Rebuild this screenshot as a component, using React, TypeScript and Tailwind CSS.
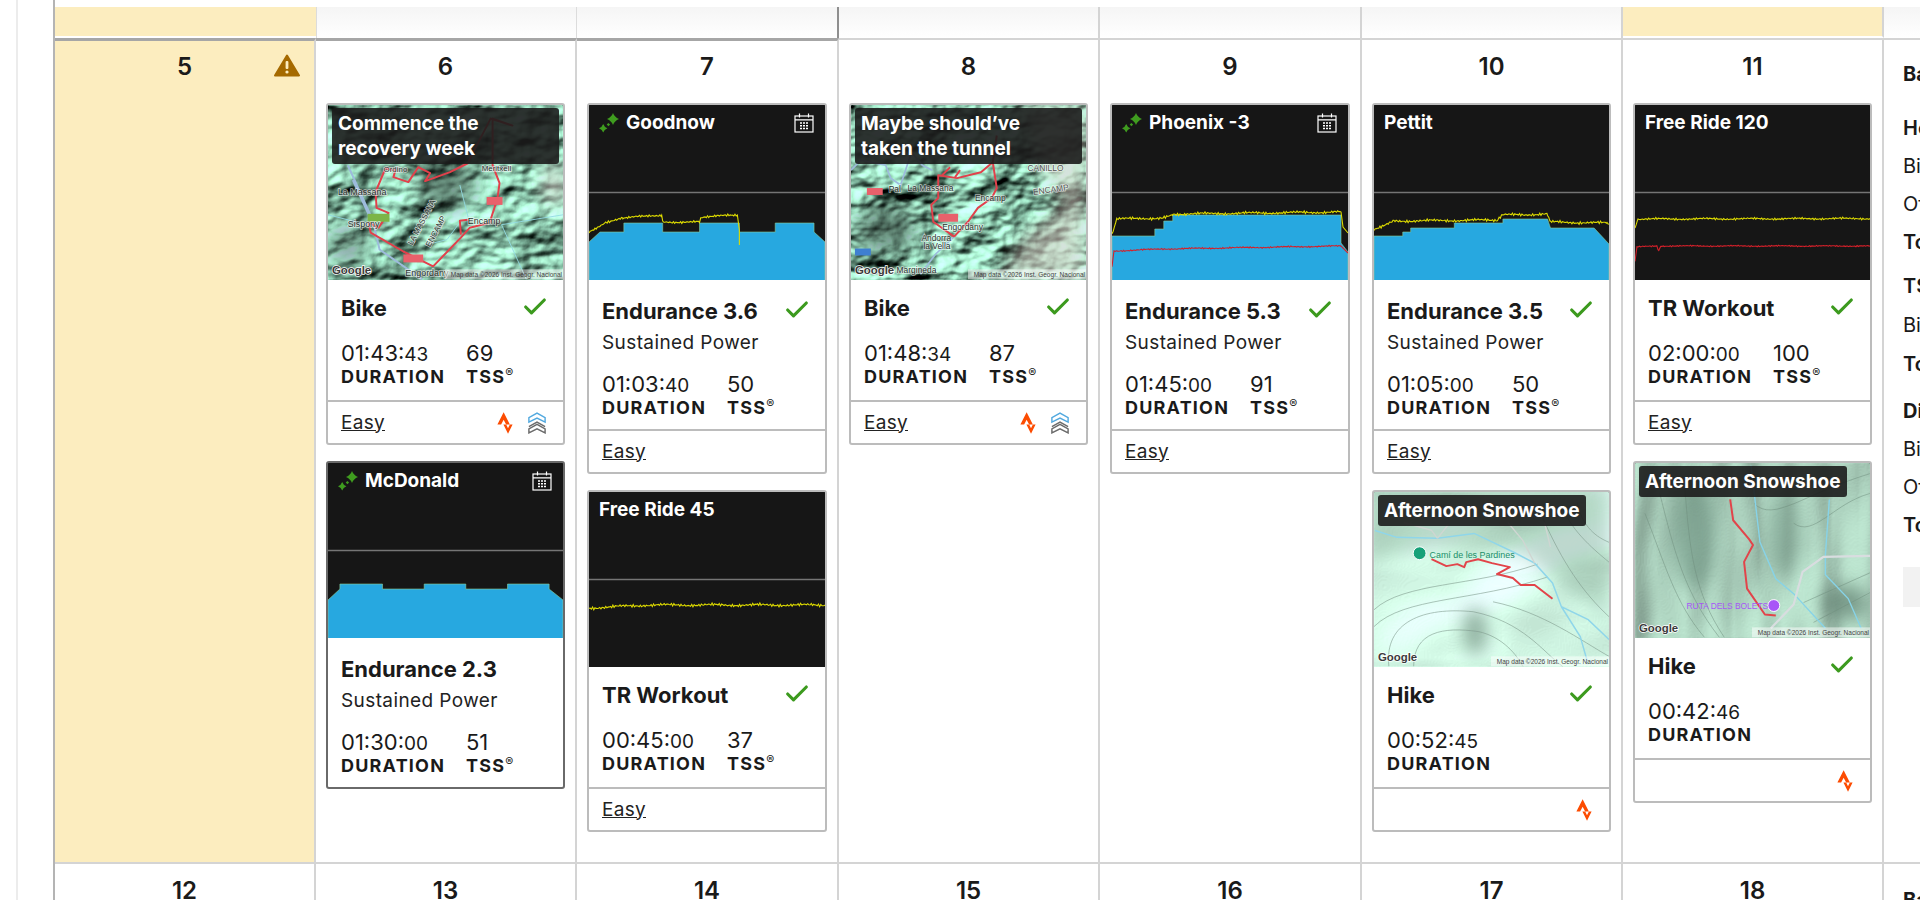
import React from 'react'
import { Check } from 'lucide-react'

type Thumb = 'gorge' | 'valley' | 'pardines' | 'boletes'

interface Activity {
    id: string
    banner: string
    bannerWide?: boolean
    planned?: boolean
    map?: Thumb
    chart?: React.ReactNode
    name: string
    sub?: string
    noCheck?: boolean
    hms: string
    sec: string
    tss?: string
    rating?: string
    strava?: boolean
    chevrons?: boolean
    outline?: boolean
}

// power/hr trace: runs through the key points with a bit of jitter
function noisy(keys: number[][], amp: number, seed: number) {
    const pts: string[] = []
    for (let i = 0; i < keys.length - 1; i++) {
        const [x0, y0] = keys[i]
        const [x1, y1] = keys[i + 1]
        for (let x = x0; x < x1; x += 1.2) {
            const t = (x - x0) / (x1 - x0)
            const n = Math.sin(x * 2.3 + seed) * Math.sin(x * 0.47 + seed * 2) + Math.sin(x * 5.1 + seed * 3) * 0.5
            pts.push(`${x.toFixed(1)},${(y0 + (y1 - y0) * t + n * amp).toFixed(1)}`)
        }
    }
    const last = keys[keys.length - 1]
    pts.push(`${last[0]},${last[1]}`)
    return pts.join(' ')
}

function Chart({ blue, yellow, red }: { blue?: string; yellow?: string; red?: string }) {
    return (
        <svg viewBox="0 0 237 175" className="block w-full h-[175px]" preserveAspectRatio="none">
            <rect width="237" height="175" fill="#161616" />
            <line x1="0" x2="237" y1="87.5" y2="87.5" stroke="#757575" strokeWidth="1.4" />
            {blue && <polygon points={blue} fill="#27a8e0" stroke="#8ccf9a" strokeWidth="0.6" />}
            {yellow && <polyline points={yellow} fill="none" stroke="#dedb00" strokeWidth="1.1" />}
            {red && <polyline points={red} fill="none" stroke="#d4202a" strokeWidth="1.1" />}
        </svg>
    )
}

function Sparkles() {
    return (
        <svg viewBox="0 0 20 20" className="w-[20px] h-[20px] shrink-0">
            <path d="M14 0 Q15.6 4.2 20 6 Q15.6 7.8 14 12 Q12.4 7.8 8 6 Q12.4 4.2 14 0Z" fill="#3f9c1f" />
            <path d="M4.2 11 Q5.2 14 8.4 15.2 Q5.2 16.4 4.2 19.4 Q3.2 16.4 0 15.2 Q3.2 14 4.2 11Z" fill="#3f9c1f" />
            <rect x="8.2" y="10.4" width="2.4" height="2.4" fill="#3f9c1f" transform="rotate(45 9.4 11.6)" />
        </svg>
    )
}

function CalendarIcon() {
    return (
        <svg viewBox="0 0 20 20" className="w-[20px] h-[20px] shrink-0" fill="none" stroke="#fff" strokeWidth="1.2">
            <rect x="1" y="3" width="18" height="16" />
            <path d="M1 6.8H19M5.5 0.5V4.5M14.5 0.5V4.5" />
            <path d="M6 10h2M9 10h2M12 10h2M6 12.7h2M9 12.7h2M12 12.7h2M6 15.4h2M9 15.4h2M12 15.4h2" strokeWidth="1.5" />
        </svg>
    )
}

function StravaIcon() {
    return (
        <svg viewBox="3 0 18 24" className="w-[16px] h-[22px]">
            <path d="M15.387 17.944l-2.089-4.116h-3.065L15.387 24l5.15-10.172h-3.066m-7.008-5.599l2.836 5.598h4.172L10.463 0l-7 13.828h4.169" fill="#fc4c02" />
        </svg>
    )
}

function ChevronsIcon() {
    return (
        <svg viewBox="0 0 20 24" className="w-[18px] h-[22px]" fill="none" strokeWidth="1.6">
            <path d="M1 11 V6 L10 1 L19 6 V11 L10 6.5Z" stroke="#52a9df" />
            <path d="M1 16 L10 11 L19 16" stroke="#6b6b6b" />
            <path d="M1 23 V18.5 L10 13.5 L19 18.5 V23 L10 18.5Z" stroke="#6b6b6b" />
        </svg>
    )
}

function WarningIcon() {
    return (
        <svg viewBox="0 0 26 23" className="w-[26px] h-[23px]">
            <path d="M13 1.5 L25 21.5 H1Z" fill="#a56a00" stroke="#a56a00" strokeWidth="2" strokeLinejoin="round" />
            <rect x="11.6" y="7" width="2.8" height="8" rx="1" fill="#fcedbf" />
            <circle cx="13" cy="18" r="1.6" fill="#fcedbf" />
        </svg>
    )
}

// hillshade made from noise, same idea for every map but different settings
function Terrain({ id, freq, octaves, scale, color, seed, diffuse = 1.1, contrast = 1, azimuth = 235, elevation = 45 }: { id: string; freq: string; octaves: number; scale: number; color: string; seed: number; diffuse?: number; contrast?: number; azimuth?: number; elevation?: number }) {
    const intercept = (1 - contrast) * 0.42
    return (
        <>
            <filter id={id} x="0" y="0" width="100%" height="100%" colorInterpolationFilters="sRGB">
                <feTurbulence type="fractalNoise" baseFrequency={freq} numOctaves={octaves} seed={seed} />
                <feDiffuseLighting surfaceScale={scale} diffuseConstant={diffuse} lightingColor={color}>
                    <feDistantLight azimuth={azimuth} elevation={elevation} />
                </feDiffuseLighting>
                <feComponentTransfer>
                    <feFuncR type="linear" slope={contrast} intercept={intercept} />
                    <feFuncG type="linear" slope={contrast} intercept={intercept} />
                    <feFuncB type="linear" slope={contrast} intercept={intercept} />
                </feComponentTransfer>
                <feGaussianBlur stdDeviation="0.5" />
            </filter>
            <rect width="237" height="175" filter={`url(#${id})`} />
        </>
    )
}

function MapThumb({ kind }: { kind: Thumb }) {
    return (
        <svg viewBox="0 0 237 175" className="block w-full h-[175px] font-['Liberation_Sans',sans-serif]">
            <defs>
                <filter id={`soft-${kind}`} x="-60%" y="-60%" width="220%" height="220%"><feGaussianBlur stdDeviation="9" /></filter>
                <filter id={`route-${kind}`}><feGaussianBlur stdDeviation="0.3" /></filter>
            </defs>
            {kind === 'gorge' && (
                <g>
                    <Terrain id="t-gorge" freq="0.014 0.02" octaves={4} scale={15} color="#aae4ca" seed={7} contrast={1.3} />
                    <ellipse cx="120" cy="80" rx="30" ry="26" fill="#2f3a35" opacity="0.5" filter="url(#soft-gorge)" />
                    <ellipse cx="20" cy="140" rx="22" ry="22" fill="#2f3a35" opacity="0.4" filter="url(#soft-gorge)" />
                    <ellipse cx="228" cy="80" rx="12" ry="22" fill="#d8d4cc" opacity="0.7" filter="url(#soft-gorge)" />
                    <g filter="url(#route-gorge)" fill="none">
                        <path d="M20 60 L45 115 L52 145 L95 175 M25 75 L48 125" stroke="#9dbbdc" strokeWidth="2" />
                        <path d="M0 110 L40 120 M135 115 L120 135 L100 140 M175 120 L200 175 M175 120 L237 110 M133 80 L142 115" stroke="#93dbe3" strokeWidth="0.9" />
                        <path d="M106 162 L76 147 L43 128 L41 118 L51 123 L61 108 L49 103 L48 87 L58 63 L68 65 L66 72 L81 77 L91 62 L103 68 L98 76 L123 67 L141 58 L150 40 L164 13 L186 20 L166 13 L166 60 L173 78 L171 93 L163 118 L143 123 L134 133 L106 162 M141 115 L133 116 L134 130" stroke="#e2404b" strokeWidth="2" strokeLinejoin="round" />
                    </g>
                    <rect x="160" y="92" width="16" height="8" fill="#e8616b" />
                    <rect x="40" y="109" width="22" height="8" fill="#7cb548" />
                    <rect x="76" y="150" width="20" height="8" fill="#e8616b" />
                    <g className="[paint-order:stroke]" fill="#2a332e" stroke="#ffffff" strokeWidth="1.6" strokeOpacity="0.65">
                        <text x="10" y="90" fontSize="9">La Massana</text>
                        <text x="20" y="122" fontSize="9">Sispony</text>
                        <text x="141" y="119" fontSize="9">Encamp</text>
                        <text x="56" y="67" fontSize="8">Ordino</text>
                        <text x="155" y="66" fontSize="8">Meritxell</text>
                        <text x="85" y="141" fontSize="8" transform="rotate(-62 85 141)">LA MASSANA</text>
                        <text x="103" y="143" fontSize="8" transform="rotate(-62 103 143)">ENCAMP</text>
                        <text x="78" y="172" fontSize="9">Engordany</text>
                    </g>
                </g>
            )}
            {kind === 'valley' && (
                <g>
                    <Terrain id="t-valley" freq="0.016 0.022" octaves={4} scale={15} color="#aae4ca" seed={21} contrast={1.3} />
                    <ellipse cx="35" cy="125" rx="32" ry="26" fill="#2f3a35" opacity="0.5" filter="url(#soft-valley)" />
                    <path d="M172 0 H237 V175 H150 L175 130 L215 100 L190 60Z" fill="#d8d2c8" opacity="0.62" filter="url(#soft-valley)" />
                    <g filter="url(#route-valley)" fill="none">
                        <path d="M0 65 L10 55 L35 60 L40 73 L50 80 L60 50 M62 48 L72 60 L82 65 M104 132 L85 150 L70 170" stroke="#9dbbdc" strokeWidth="1.7" />
                        <path d="M104 132 L83 117 L81 100 L88 93 L88 70 L107 73 L131 67 L143 57 L147 83 L142 93 L128 103 L118 117 L104 132 M92 70 L100 62 M110 65 L105 72 M143 57 L147 30" stroke="#e2404b" strokeWidth="2" strokeLinejoin="round" />
                    </g>
                    <rect x="88" y="109" width="20" height="8" fill="#e8616b" />
                    <rect x="16" y="83" width="16" height="7" fill="#e8616b" />
                    <rect x="4" y="144" width="16" height="7" fill="#3f7fd1" />
                    <g className="[paint-order:stroke]" fill="#2a332e" stroke="#ffffff" strokeWidth="1.5" strokeOpacity="0.6" fontSize="8.5">
                        <text x="38" y="87">Pal</text>
                        <text x="57" y="86">La Massana</text>
                        <text x="125" y="96">Encamp</text>
                        <text x="92" y="125">Engordany</text>
                        <text x="71" y="136">Andorra</text>
                        <text x="73" y="144">la Vella</text>
                        <text x="178" y="66" fill="#555">CANILLO</text>
                        <text x="184" y="90" fill="#555" transform="rotate(-8 184 90)">ENCAMP</text>
                        <text x="46" y="169">Margineda</text>
                    </g>
                </g>
            )}
            {kind === 'pardines' && (
                <g>
                    <Terrain id="t-pardines" freq="0.007 0.012" octaves={2} scale={9} color="#c8ecda" seed={4} diffuse={1.25} elevation={60} />
                    <path d="M-10 70 L60 55 L150 60 L237 130 L237 -10 L-10 -10Z" fill="#8fb39f" opacity="0.5" filter="url(#soft-pardines)" />
                    <ellipse cx="102" cy="140" rx="12" ry="24" fill="#7a9a89" opacity="0.8" filter="url(#soft-pardines)" />
                    <g stroke="#7f9a8c" strokeWidth="0.6" fill="none">
                        <path d="M0 118 C30 90 100 95 165 72" />
                        <path d="M0 135 C30 105 100 110 175 85" />
                        <path d="M15 175 C10 130 50 115 100 120 C150 130 170 160 190 175" />
                        <path d="M40 175 C40 140 70 135 105 140 C130 145 145 165 150 175" />
                        <path d="M120 110 C170 120 210 150 237 165" />
                        <path d="M170 25 C190 70 210 100 237 125" />
                        <path d="M190 15 C200 40 225 60 237 70" />
                        <path d="M205 10 C210 35 225 45 237 50" />
                    </g>
                    <path d="M1 38 L23 45 L64 46 L101 41 L141 60 L162 71 L180 91 L189 115 L216 128 L237 148 M189 115 L208 145 L216 173" stroke="#8fd6ea" strokeWidth="1.5" fill="none" />
                    <path d="M64 46 L58 38 L30 30 M64 46 L75 32 M162 71 L150 48 L135 30 M172 30 L178 55" stroke="#cfd6d2" strokeWidth="1.4" fill="none" />
                    <circle cx="46" cy="61" r="6.5" fill="#16a179" stroke="#fff" strokeWidth="1" />
                    <text x="56" y="66" fontSize="9" fill="#1b8f69">Camí de les Pardines</text>
                    <path d="M58 67 L73 74 L84 72 L91 75 L93 70 L105 67 L119 71 L137 75 L124 82 L140 86 L148 93 L162 93 L180 107" stroke="#e2444a" strokeWidth="2" fill="none" strokeLinejoin="round" />
                </g>
            )}
            {kind === 'boletes' && (
                <g>
                    <Terrain id="t-boletes" freq="0.02 0.006" octaves={2} scale={10} color="#b0d6c2" seed={12} diffuse={1.2} elevation={55} />
                    <ellipse cx="60" cy="70" rx="22" ry="58" fill="#5f8171" opacity="0.6" filter="url(#soft-boletes)" />
                    <ellipse cx="150" cy="70" rx="16" ry="46" fill="#6f9382" opacity="0.55" filter="url(#soft-boletes)" />
                    <ellipse cx="212" cy="140" rx="24" ry="18" fill="#617f70" opacity="0.7" filter="url(#soft-boletes)" />
                    <g stroke="#6f8c7d" strokeWidth="0.5" fill="none">
                        <path d="M10 50 C30 100 40 140 70 175 M25 30 C40 90 50 130 85 175 M50 20 C55 90 60 130 90 175 M120 40 C140 60 170 30 237 10 M160 60 C180 75 200 40 237 30 M170 140 L237 110 M180 160 L237 130" />
                    </g>
                    <path d="M117 2 L126 79 L142 116 L160 131 L192 166 M196 36 L192 92 L192 112 L215 136 L228 166" stroke="#87d3e8" strokeWidth="1.4" fill="none" />
                    <path d="M137 166 L160 142 L169 109 L190 94 L237 93" stroke="#d9dde0" strokeWidth="2.2" fill="none" />
                    <path d="M96 36 L99 57 L115 76 L119 82 L110 99 L113 126 L131 152 L142 153" stroke="#e2444a" strokeWidth="2" fill="none" strokeLinejoin="round" />
                    <circle cx="140" cy="143" r="6" fill="#a855f7" stroke="#fff" strokeWidth="1" />
                    <text x="52" y="147" fontSize="8.5" fill="#a855f7">RUTA DELS BOLETS</text>
                </g>
            )}
            <text x="4" y="170" fontSize="11.5" fontWeight="700" fill="#3a3a3a" stroke="#fff" strokeWidth="1.4" className="[paint-order:stroke]">Google</text>
            <rect x="118" y="165" width="119" height="10" fill="#fff" fillOpacity="0.5" />
            <text x="236" y="173" fontSize="6.6" textAnchor="end" fill="#444">Map data ©2026 Inst. Geogr. Nacional</text>
        </svg>
    )
}

const cols: { day: number; warn?: boolean; items: Activity[] }[] = [
    { day: 5, warn: true, items: [] },
    {
        day: 6,
        items: [
            { id: 'a', banner: 'Commence the recovery week', bannerWide: true, map: 'gorge', name: 'Bike', hms: '01:43:', sec: '43', tss: '69', rating: 'Easy', strava: true, chevrons: true },
            {
                id: 'b', banner: 'McDonald', planned: true, name: 'Endurance 2.3', sub: 'Sustained Power', noCheck: true, hms: '01:30:', sec: '00', tss: '51', outline: true,
                chart: <Chart blue="0,137 12,126 12,121 55,121 55,126 97,126 97,121 139,121 139,126 181,126 181,121 223,121 223,126 237,137 237,176 0,176" />,
            },
        ],
    },
    {
        day: 7,
        items: [
            {
                id: 'c', banner: 'Goodnow', planned: true, name: 'Endurance 3.6', sub: 'Sustained Power', hms: '01:03:', sec: '40', tss: '50', rating: 'Easy',
                chart: <Chart blue="0,137 11,127 35,127 35,118 74,118 74,127 111,127 111,118 151,118 151,127 187,127 187,118 226,118 226,127 237,137 237,176 0,176" yellow={noisy([[0, 127], [17, 117], [34, 113], [73, 110], [74, 117], [111, 117], [113, 112], [149, 110]], 1.1, 1) + ' 151,125 151,140'} />,
            },
            { id: 'd', banner: 'Free Ride 45', name: 'TR Workout', hms: '00:45:', sec: '00', tss: '37', rating: 'Easy', chart: <Chart yellow={noisy([[0, 116], [60, 113], [237, 113]], 1.4, 3)} /> },
        ],
    },
    {
        day: 8,
        items: [{ id: 'e', banner: 'Maybe should’ve taken the tunnel', bannerWide: true, map: 'valley', name: 'Bike', hms: '01:48:', sec: '34', tss: '87', rating: 'Easy', strava: true, chevrons: true }],
    },
    {
        day: 9,
        items: [
            {
                id: 'f', banner: 'Phoenix -3', planned: true, name: 'Endurance 5.3', sub: 'Sustained Power', hms: '01:45:', sec: '00', tss: '91', rating: 'Easy',
                chart: <Chart blue="0,131 43,131 43,124 52,124 52,116 61,116 61,110 230,110 230,138 237,147 237,176 0,176" yellow={noisy([[0, 130], [5, 114], [50, 113], [61, 109], [230, 107]], 1.3, 4) + ' 232,122 237,128'} red={noisy([[0, 162], [2, 146], [50, 144], [230, 141]], 0.7, 6) + ' 237,148'} />,
            },
        ],
    },
    {
        day: 10,
        items: [
            {
                id: 'g', banner: 'Pettit', name: 'Endurance 3.5', sub: 'Sustained Power', hms: '01:05:', sec: '00', tss: '50', rating: 'Easy',
                chart: <Chart blue="0,131 29,131 29,127 37,127 37,123 81,123 81,118 130,118 130,114 175,114 178,123 222,123 237,139 237,176 0,176" yellow={noisy([[0, 124], [20, 116], [125, 115], [130, 110], [175, 109], [178, 117], [235, 118], [237, 119]], 1.3, 7)} />,
            },
            { id: 'h', banner: 'Afternoon Snowshoe', map: 'pardines', name: 'Hike', hms: '00:52:', sec: '45', strava: true },
        ],
    },
    {
        day: 11,
        items: [
            { id: 'i', banner: 'Free Ride 120', name: 'TR Workout', hms: '02:00:', sec: '00', tss: '100', rating: 'Easy', chart: <Chart yellow={noisy([[0, 124], [3, 114], [237, 113.5]], 1, 10)} red={noisy([[0, 156], [2, 142], [22, 141], [24, 146], [26, 141], [237, 141]], 0.6, 11)} /> },
            { id: 'j', banner: 'Afternoon Snowshoe', map: 'boletes', name: 'Hike', hms: '00:42:', sec: '46', strava: true },
        ],
    },
]

function ActivityCard({ a }: { a: Activity }) {
    return (
        <div className={`relative rounded-[3px] border-2 bg-white overflow-hidden ${a.outline ? 'border-[#6a6a6a]' : 'border-[#bcbcbc]'}`}>
            <div className="relative h-[175px] bg-[#161616]">
                {a.map ? <MapThumb kind={a.map} /> : a.chart}
                {a.map ? (
                    <div className={`absolute top-[3px] left-[4px] rounded-[3px] bg-[#1c1c1c]/90 px-[6px] text-[19px] leading-[25px] font-bold text-white py-[3px] ${a.bannerWide ? 'right-[4px]' : 'whitespace-nowrap'}`}>{a.banner}</div>
                ) : (
                    <div className="absolute top-[5px] left-[10px] right-[11px] flex items-center justify-between">
                        <div className="flex items-center gap-[7px] text-[19px] leading-[26px] font-bold text-white">
                            {a.planned && <Sparkles />}
                            {a.banner}
                        </div>
                        {a.planned && <CalendarIcon />}
                    </div>
                )}
            </div>
            <div className={`px-[13px] ${a.sub ? 'pt-[18px] pb-[10px]' : 'pt-[15px] pb-[12px]'}`}>
                <div className="flex items-start justify-between">
                    <div className="text-[22px] leading-[26px] font-bold text-[#1a1a1a] whitespace-nowrap">{a.name}</div>
                    {!a.noCheck && <Check className="w-[28px] h-[28px] text-[#3c9a1e] mr-[1px] mt-[-2px]" strokeWidth={2.7} />}
                </div>
                {a.sub && <div className="text-[19px] leading-[24px] mt-[7px] text-[#222] tracking-[0.4px]">{a.sub}</div>}
                <div className={`flex ${a.sub ? 'mt-[16px]' : 'mt-[19px]'}`}>
                    <div className="w-[125px]">
                        <div className="text-[22px] leading-[26px] text-[#1a1a1a]">{a.hms}<span className="text-[19px] leading-none">{a.sec}</span></div>
                        <div className="text-[18px] leading-[22px] font-bold tracking-[1.2px] text-[#1a1a1a]">DURATION</div>
                    </div>
                    {a.tss && (
                        <div>
                            <div className="text-[22px] leading-[26px] text-[#1a1a1a]">{a.tss}</div>
                            <div className="text-[18px] leading-[22px] font-bold tracking-[1.2px] text-[#1a1a1a]">TSS<sup className="text-[12px] font-normal tracking-normal">®</sup></div>
                        </div>
                    )}
                </div>
            </div>
            {(a.rating || a.strava) && (
                <div className="h-[43px] border-t-2 border-[#bcbcbc] px-[13px] pt-[1px] flex items-center justify-between">
                    <span className="text-[19px] underline text-[#222] tracking-[0.3px]">{a.rating}</span>
                    <div className="flex items-center gap-[15px] pr-[4px]">
                        {a.strava && <StravaIcon />}
                        {a.chevrons && <ChevronsIcon />}
                    </div>
                </div>
            )}
        </div>
    )
}

function TotalsColumn() {
    return (
        <div className="border-t-2 border-[#d4d4d4] pl-[19px] pt-[22px] overflow-hidden whitespace-nowrap text-[20px] leading-[24px] text-[#1a1a1a]">
            <div className="font-bold">Ba</div>
            <div className="mt-[30px] flex flex-col gap-[14px]">
                <div className="font-semibold">Ho</div>
                <div>Bi</div>
                <div>Of</div>
                <div className="font-semibold">To</div>
            </div>
            <div className="mt-[20px] flex flex-col gap-[15px]">
                <div className="font-semibold">TS</div>
                <div>Bi</div>
                <div className="font-semibold">To</div>
            </div>
            <div className="mt-[23px] flex flex-col gap-[14px]">
                <div className="font-bold">Di</div>
                <div>Bi</div>
                <div>Of</div>
                <div className="font-semibold">To</div>
            </div>
            <div className="mt-[30px] h-[40px] bg-[#f2f2f2]" />
        </div>
    )
}

const nextWeek = [12, 13, 14, 15, 16, 17, 18]

export default function App() {
    return (
        <div className="w-[1920px] h-[900px] overflow-hidden bg-white flex font-['Inter',sans-serif] text-[#1a1a1a]">
            {/* Left gutter */}
            <div className="w-[53px] shrink-0 pl-[16px]">
                <div className="h-full border-l-2 border-[#ececec]" />
            </div>

            <div className="flex-1 min-w-0 border-l-2 border-[#b4b4b4]">
                {/* Tail of the week above */}
                <div className="h-[7px] bg-white" />
                <div className="h-[31px] grid grid-cols-[261px_261px_262px_261px_262px_261px_261px_1fr]">
                    <div className="bg-[#fcedbf] border-b-2 border-white" />
                    <div className="border-l border-r border-[#dcdcdc] bg-gradient-to-b from-[#f5f5f5] to-white" />
                    <div className="border-r-2 border-[#8f8f8f] bg-gradient-to-b from-[#f5f5f5] to-white" />
                    <div className="border-r-2 border-[#d4d4d4] bg-gradient-to-b from-[#f5f5f5] to-white" />
                    <div className="border-r-2 border-[#d4d4d4] bg-gradient-to-b from-[#f5f5f5] to-white" />
                    <div className="border-r-2 border-[#d4d4d4] bg-gradient-to-b from-[#f5f5f5] to-white" />
                    <div className="bg-[#fcedbf] border-r-2 border-[#d4d4d4] border-b-2 border-b-white" />
                    <div className="bg-gradient-to-b from-[#f5f5f5] to-white" />
                </div>

                {/* Week row */}
                <div className="h-[826px] grid grid-cols-[261px_261px_262px_261px_262px_261px_261px_1fr] border-b-2 border-b-[#d4d4d4]">
                    {cols.map((c, i) => (
                        <div key={c.day} className={`relative border-r-2 border-r-[#d4d4d4] px-[10px] ${i < 3 ? 'border-t-[3px] border-t-[#a6a6a6]' : 'border-t-2 border-t-[#d4d4d4]'} ${c.warn ? 'bg-[#fcedbf]' : ''}`}>
                            <div className={`${i < 3 ? 'h-[62px] pt-[11px]' : 'h-[63px] pt-[12px]'} text-center text-[24px] leading-[30px] font-semibold`}>{c.day}</div>
                            {c.warn && <div className="absolute top-[13px] right-[14px]"><WarningIcon /></div>}
                            <div className="flex flex-col gap-[16px]">
                                {c.items.map((a) => <ActivityCard key={a.id} a={a} />)}
                            </div>
                        </div>
                    ))}
                    <TotalsColumn />
                </div>

                {/* Next week header */}
                <div className="grid grid-cols-[261px_261px_262px_261px_262px_261px_261px_1fr] h-[40px]">
                    {nextWeek.map((d) => (
                        <div key={d} className="border-r-2 border-[#d4d4d4] pt-[12px] text-center text-[24px] leading-[30px] font-semibold">{d}</div>
                    ))}
                    <div className="pl-[19px] pt-[24px] text-[20px] leading-[24px] font-bold">Ba</div>
                </div>
            </div>
        </div>
    )
}
